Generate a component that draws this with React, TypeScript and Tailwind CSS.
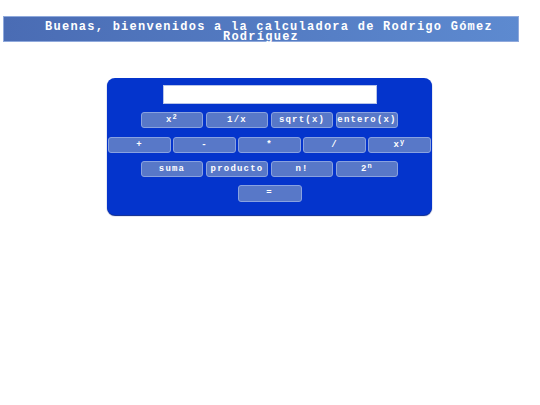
import React from "react";

const mono = { fontFamily: '"Liberation Mono", "DejaVu Sans Mono", monospace' };

function Btn({ children, w = "w-[62px]", h = "h-[16px]" }: { children: React.ReactNode; w?: string; h?: string }) {
  return (
    <button
      className={`${w} ${h} flex items-center justify-center rounded-[3px] border border-[#89a2e0] bg-[#5878c8] text-white text-[9px] font-bold tracking-[1.2px] leading-none`}
      style={mono}
    >
      {children}
    </button>
  );
}

function Sup({ children }: { children: React.ReactNode }) {
  return <sup className="text-[7px] relative -top-[3px] align-baseline">{children}</sup>;
}

export default function App() {
  return (
    <div className="w-[540px] h-[405px] bg-white pt-[16px]">
      <h1
        className="ml-[3px] w-[516px] h-[26px] border border-[#8fa9dc] bg-gradient-to-r from-[#4a6cb4] to-[#5d8ad0] text-white text-center font-bold text-[12px] leading-[10px] pt-[5px] tracking-[1.25px]"
        style={mono}
      >
        <span className="block pl-[16px]">Buenas, bienvenidos a la calculadora de Rodrigo Gómez</span>
        <span className="block">Rodríguez</span>
      </h1>
      <div className="ml-[107px] mt-[36px] w-[325px] rounded-[8px] bg-[#0434cc] pt-[7px] pb-[13px] shadow-[0_1px_1px_#00208a] flex flex-col items-center">
        <div className="w-[214px] h-[19px] bg-white border border-[#b8c4e8]" />
        <div className="mt-[8px] flex gap-[3px]">
          <Btn>
            x<Sup>2</Sup>
          </Btn>
          <Btn>1/x</Btn>
          <Btn>sqrt(x)</Btn>
          <Btn>entero(x)</Btn>
        </div>
        <div className="mt-[9px] flex gap-[2px]">
          <Btn w="w-[63px]">+</Btn>
          <Btn w="w-[63px]">-</Btn>
          <Btn w="w-[63px]">*</Btn>
          <Btn w="w-[63px]">/</Btn>
          <Btn w="w-[63px]">
            x<Sup>y</Sup>
          </Btn>
        </div>
        <div className="mt-[8px] flex gap-[3px]">
          <Btn>suma</Btn>
          <Btn>producto</Btn>
          <Btn>n!</Btn>
          <Btn>
            2<Sup>n</Sup>
          </Btn>
        </div>
        <div className="mt-[8px] flex">
          <Btn w="w-[64px]" h="h-[17px]">=</Btn>
        </div>
      </div>
    </div>
  );
}
